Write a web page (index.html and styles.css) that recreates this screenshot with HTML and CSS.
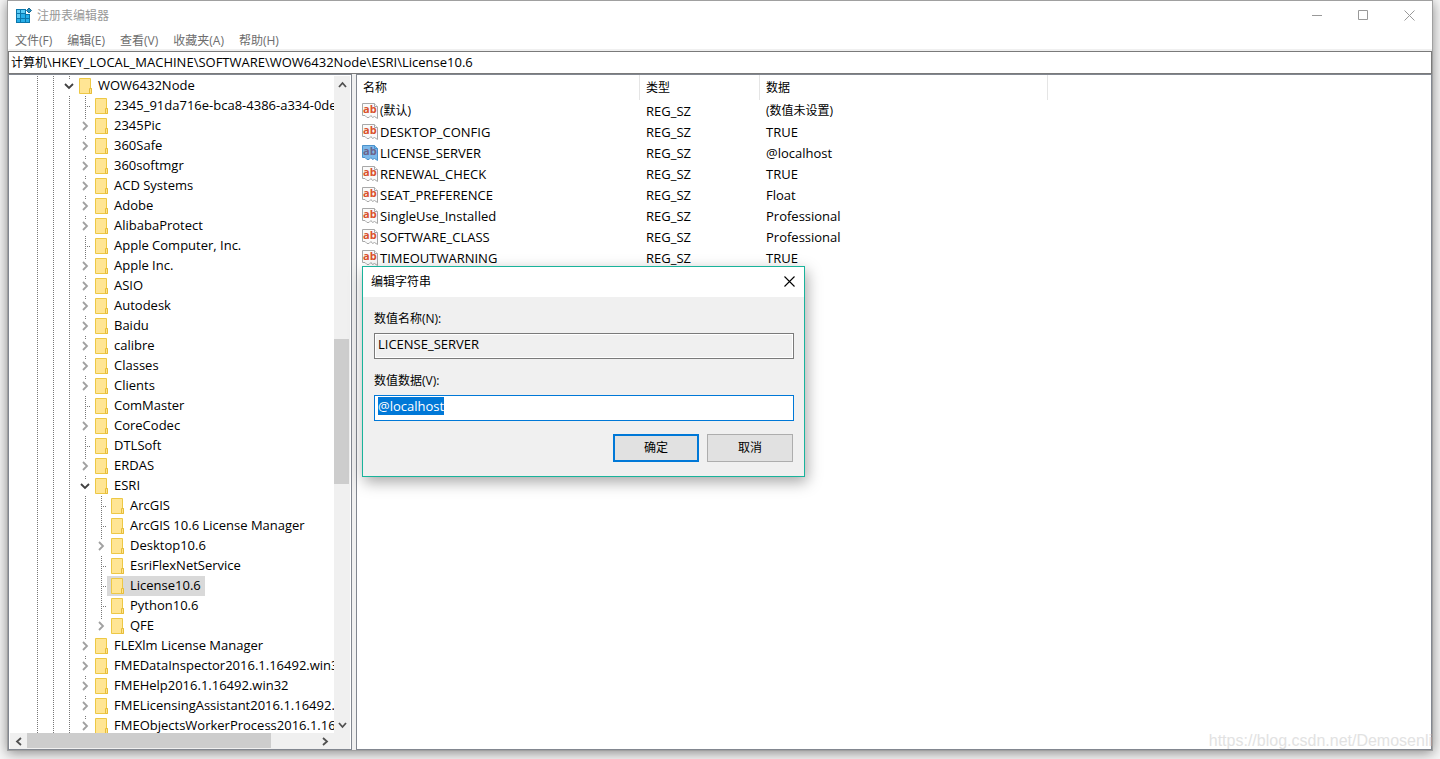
FILE: index.html
```html
<!DOCTYPE html>
<html lang="zh-CN">
<head>
<meta charset="utf-8">
<title>注册表编辑器</title>
<link rel="stylesheet" href="styles.css">
</head>
<body>
<svg class="defs" aria-hidden="true">
  <symbol id="folder" viewBox="0 0 13 16">
    <path d="M.5.5h11v10h1v5H.5z" fill="#ffe594" stroke="#edc845"/>
    <path d="M10.500 15.500v-5h2v5z" fill="#ffe48a" stroke="#e6bd3c"/>
  </symbol>
  <symbol id="right" viewBox="0 0 8 10"><path d="M2 1l4 4-4 4" fill="none" stroke="#a0a0a0" stroke-width="1.800"/></symbol>
  <symbol id="down" viewBox="0 0 10 8"><path d="M1 2l4 4 4-4" fill="none" stroke="#404040" stroke-width="1.800"/></symbol>
</svg>
<main class="window">
  <header class="titlebar">
    <svg class="app-icon" width="16" height="16" viewBox="0 0 16 16">
      <path d="M0 1h10v5h4v9H0z" fill="#0a76ab"/>
      <g fill="#5ccbf5"><path d="M1 2h3v3H1zM5 2h4v3H5zM1 6h3v4H1z"/></g>
      <g fill="#27aee8"><path d="M5 6h4v4H5zM10 7h3v3h-3zM1 11h3v3H1zM5 11h4v3H5zM10 11h3v3h-3z"/></g>
      <path d="M13 0l2.500 2.500L13 5l-2.500-2.500z" fill="#2b8fbd" stroke="#176a94"/>
    </svg>
    <h1 class="title">注册表编辑器</h1>
    <div class="window-buttons">
      <button class="window-button" aria-label="最小化"><svg width="11" height="11"><path d="M0 5.500h10" stroke="#999"/></svg></button>
      <button class="window-button" aria-label="最大化"><svg width="11" height="11"><path d="M.5.5h9v9h-9z" fill="none" stroke="#999"/></svg></button>
      <button class="window-button" aria-label="关闭"><svg width="11" height="11"><path d="M.5.5l10 10M10.500.5l-10 10" stroke="#999"/></svg></button>
    </div>
  </header>
  <nav class="menu">
    <button class="menu-item">文件(F)</button><button class="menu-item">编辑(E)</button><button class="menu-item">查看(V)</button><button class="menu-item">收藏夹(A)</button><button class="menu-item">帮助(H)</button>
  </nav>
  <div class="address"><span class="cjk">计算机</span>\HKEY_LOCAL_MACHINE\SOFTWARE\WOW6432Node\ESRI\License10.6</div>
  <div class="panes">
    <section class="tree-pane">
      <ul class="tree" id="tree"></ul>
      <div class="scroll-y">
        <button class="scroll-button" aria-label="向上滚动"><svg width="9" height="8"><path d="M1 6l3.500-4L8 6" fill="none" stroke="#505050" stroke-width="1.800"/></svg></button>
        <div class="thumb-y"></div>
        <button class="scroll-button" aria-label="向下滚动"><svg width="9" height="8"><path d="M1 2l3.500 4L8 2" fill="none" stroke="#505050" stroke-width="1.800"/></svg></button>
      </div>
      <div class="scroll-x">
        <button class="scroll-button" aria-label="向左滚动"><svg width="8" height="9"><path d="M6 1L2 4.500 6 8" fill="none" stroke="#505050" stroke-width="1.800"/></svg></button>
        <div class="thumb-x"></div>
        <button class="scroll-button" aria-label="向右滚动"><svg width="8" height="9"><path d="M2 1l4 3.500L2 8" fill="none" stroke="#505050" stroke-width="1.800"/></svg></button>
      </div>
    </section>
    <section class="values-pane">
      <table class="values">
        <colgroup><col class="col-name"><col class="col-type"><col class="col-data"><col></colgroup>
        <thead><tr><th>名称</th><th>类型</th><th>数据</th><td></td></tr></thead>
        <tbody id="values"></tbody>
      </table>
    </section>
  </div>
  <div class="watermark">https://blog.csdn.net/Demosenli</div>
  <form class="dialog" role="dialog" aria-labelledby="dialog-title">
    <div class="dialog-bar">
      <h2 class="dialog-title" id="dialog-title">编辑字符串</h2>
      <button type="button" class="dialog-close" aria-label="关闭"><svg width="11" height="11"><path d="M.5.5l10 10M10.500.5l-10 10" stroke="#000" stroke-width="1.100"/></svg></button>
    </div>
    <div class="dialog-body">
      <label class="label" for="name">数值名称(N):</label>
      <input class="field readonly" id="name" value="LICENSE_SERVER" readonly>
      <label class="label" for="data">数值数据(V):</label>
      <input class="field active" id="data" value="@localhost">
      <div class="actions">
        <button type="button" class="button primary">确定</button>
        <button type="button" class="button">取消</button>
      </div>
    </div>
  </form>
</main>
<script src="app.js"></script>
</body>
</html>
```

FILE: styles.css
```css
* { box-sizing: border-box; }

body {
  margin: 0;
  height: 100vh;
  padding: 0 7px 8px 7px;
  background: #f7f7f7;
  color: #000;
  font: 13px/20px "Open Sans", "Noto Sans CJK SC", sans-serif;
  overflow: hidden;
}

button, input { font: inherit; color: inherit; border: 0; padding: 0; background: none; }
h1, h2, ul { margin: 0; padding: 0; font-weight: 400; }
svg { display: block; }
.defs { display: none; }
.cjk { font-size: 12px; }

.window {
  position: relative;
  display: flex;
  flex-direction: column;
  height: 100%;
  border: 1px solid #a0a0a0;
  background: #fff;
  box-shadow: 0 2px 12px rgba(0, 0, 0, .45);
}

.titlebar { display: flex; align-items: center; height: 30px; padding-left: 8px; }
.title { margin-left: 5px; color: #999; font-size: 12px; }
.window-buttons { display: flex; margin-left: auto; }
.window-button { display: grid; place-items: center; width: 46px; height: 28px; padding-bottom: 2px; }

.menu {
  display: flex;
  gap: 15px;
  height: 20px;
  padding-left: 7px;
  border-bottom: 2px solid #f0f0f0;
  color: #6d6d6d;
  font-size: 12px;
  line-height: 20px;
}

.address { height: 23px; padding-left: 2px; border: 1px solid #7a7a7a; white-space: nowrap; }

.panes { display: flex; flex: 1; gap: 4px; min-height: 0; background: #f0f0f0; }
.tree-pane, .values-pane { border: 1px solid #828790; background: #fff; overflow: hidden; }
.values-pane { flex: 1; }

.tree-pane {
  display: grid;
  grid-template: minmax(0, 1fr) 16px / minmax(0, 1fr) 16px;
  width: 344px;
  padding: 1px 1px 0;
}

.tree { padding-left: 19px; overflow: hidden; list-style: none; }
.row { display: flex; align-items: center; height: 20px; white-space: nowrap; }
.guide {
  flex: none;
  width: 16px;
  height: 20px;
  background: repeating-linear-gradient(#777 0 1px, #fff 1px 2px) 8px 0 / 1px 20px no-repeat;
}
.branch {
  width: 14px;
  background:
    repeating-linear-gradient(#777 0 1px, #fff 1px 2px) 8px 0 / 1px 20px no-repeat,
    repeating-linear-gradient(90deg, #777 0 1px, #fff 1px 2px) 8px 10px / 6px 1px no-repeat;
}
.toggle {
  display: grid;
  place-items: center;
  width: 14px;
  padding-left: 1px;
  background: repeating-linear-gradient(#777 0 1px, #fff 1px 2px) 8px 0 / 1px 3px no-repeat;
}
.node { display: flex; align-items: center; gap: 6px; height: 20px; padding: 0 4px; line-height: 18px; }
.node-name { height: 20px; }
.selected { background: #d9d9d9; }
.folder { flex: none; width: 13px; height: 16px; }

.scroll-y, .scroll-x { display: flex; background: #f0f0f0; }
.scroll-y { flex-direction: column; }
.scroll-x { grid-column: 1 / -1; padding-right: 17px; }
.scroll-button { display: grid; place-items: center; width: 16px; height: 17px; }
.scroll-x .scroll-button { width: 17px; height: 16px; }
.thumb-y { width: 15px; height: 22%; margin: 246px 0 auto; background: #cdcdcd; }
.thumb-x { width: 244px; height: 15px; margin-right: auto; background: #cdcdcd; }

.values { width: 100%; border-collapse: separate; border-spacing: 0; table-layout: fixed; }
.col-name { width: 283px; }
.col-type { width: 120px; }
.col-data { width: 288px; }
.values th, .values td { padding: 0 0 0 6px; text-align: left; font-weight: 400; }
.values th { height: 25px; border-right: 1px solid #e5e5e5; font-size: 12px; }
.values tbody td { height: 21px; line-height: 20px; }
.values .name { padding-left: 5px; }
.name-box { display: flex; align-items: center; gap: 2px; }
.string-icon { flex: none; width: 16px; height: 16px; fill: #fafafa; stroke: #a8a8a8; }
.string-text { fill: #d9512c; stroke: none; font: 700 11px "Open Sans", sans-serif; }
.string-icon.edited { fill: #7db9ea; stroke: #4b93cc; }
.edited .string-text { fill: #6c648b; }

.watermark {
  position: absolute;
  right: 0;
  bottom: 0;
  color: #e2e2e2;
  font: 16px/18px "Liberation Sans", sans-serif;
}

.dialog {
  position: absolute;
  left: 354px;
  top: 265px;
  width: 443px;
  border: 1px solid #19b39b;
  background: #f0f0f0;
  box-shadow: 2px 5px 14px rgba(0, 0, 0, .35);
  font-size: 12px;
}
.dialog-bar { display: flex; justify-content: space-between; height: 30px; padding-left: 8px; background: #fff; }
.dialog-title { font-size: 12px; line-height: 29px; }
.dialog-close { display: grid; place-items: center; width: 30px; height: 29px; }
.dialog-body { display: flex; flex-direction: column; padding: 12px 10px 14px 11px; }
.label { margin-bottom: 4px; }
.field {
  height: 26px;
  margin-bottom: 12px;
  padding: 0 3px 4px;
  border: 1px solid #7a7a7a;
  font-size: 13px;
  outline: 0;
}
.readonly { box-shadow: inset 0 0 0 1px #fff; }
.active { margin-bottom: 13px; border-color: #0078d7; background: #fff; }
.active::selection { background: #0078d7; color: #fff; }
.actions { display: flex; justify-content: flex-end; gap: 8px; padding-right: 1px; }
.button { width: 86px; height: 28px; border: 1px solid #adadad; background: #e1e1e1; }
.primary { border: 2px solid #0078d7; }
```

FILE: app.js
```js
// Each entry: name, depth below the root key, and state: "+" closed, "-" open, "" leaf.
const keys = [
  ["WOW6432Node", 2, "-"], ["2345_91da716e-bca8-4386-a334-0de9", 3, ""],
  ["2345Pic", 3, "+"], ["360Safe", 3, "+"], ["360softmgr", 3, "+"],
  ["ACD Systems", 3, "+"], ["Adobe", 3, "+"], ["AlibabaProtect", 3, "+"],
  ["Apple Computer, Inc.", 3, ""], ["Apple Inc.", 3, "+"], ["ASIO", 3, "+"],
  ["Autodesk", 3, "+"], ["Baidu", 3, "+"], ["calibre", 3, "+"],
  ["Classes", 3, "+"], ["Clients", 3, "+"], ["ComMaster", 3, ""],
  ["CoreCodec", 3, "+"], ["DTLSoft", 3, ""], ["ERDAS", 3, "+"],
  ["ESRI", 3, "-"], ["ArcGIS", 4, ""], ["ArcGIS 10.6 License Manager", 4, ""],
  ["Desktop10.6", 4, "+"], ["EsriFlexNetService", 4, ""], ["License10.6", 4, ""],
  ["Python10.6", 4, ""], ["QFE", 4, "+"], ["FLEXlm License Manager", 3, "+"],
  ["FMEDataInspector2016.1.16492.win32", 3, "+"], ["FMEHelp2016.1.16492.win32", 3, "+"],
  ["FMELicensingAssistant2016.1.16492.win32", 3, "+"],
  ["FMEObjectsWorkerProcess2016.1.16492.win32", 3, "+"]
];

document.getElementById("tree").innerHTML = keys.map(([name, depth, state]) => {
  const guides = '<span class="guide"></span>'.repeat(depth);
  const arrow = state === "-"
    ? '<svg width="10" height="8"><use href="#down"/></svg>'
    : '<svg width="8" height="10"><use href="#right"/></svg>';
  const joint = state
    ? `<button class="guide toggle" aria-label="${name}" aria-expanded="${state === "-"}">${arrow}</button>`
    : '<span class="guide branch"></span>';
  const selected = name === "License10.6" ? " selected" : "";
  return `<li class="row">${guides}${joint}<span class="node${selected}"><svg class="folder"><use href="#folder"/></svg><span class="node-name">${name}</span></span></li>`;
}).join("");

const values = [
  ["(默认)", "(数值未设置)"], ["DESKTOP_CONFIG", "TRUE"], ["LICENSE_SERVER", "@localhost"],
  ["RENEWAL_CHECK", "TRUE"], ["SEAT_PREFERENCE", "Float"], ["SingleUse_Installed", "Professional"],
  ["SOFTWARE_CLASS", "Professional"], ["TIMEOUTWARNING", "TRUE"]
];

document.getElementById("values").innerHTML = values.map(([name, data]) => {
  const cjk = name.startsWith("(") ? ' class="cjk"' : "";
  const edited = name === "LICENSE_SERVER" ? " edited" : "";
  return `<tr><td class="name"><span class="name-box"><svg class="string-icon${edited}" viewBox="0 0 16 16">
    <path d="M.5.5h12l3 3v12l-3-2-2 1-1.500-2-2 2H5L3 12.500H.5z"/><path d="M12.500.5v3h3"/>
    <text class="string-text" x="1" y="10">ab</text></svg><span${cjk}>${name}</span></span></td><td>REG_SZ</td><td><span${cjk}>${data}</span></td><td></td></tr>`;
}).join("");

const dataField = document.getElementById("data");
dataField.focus();
dataField.select();
```
